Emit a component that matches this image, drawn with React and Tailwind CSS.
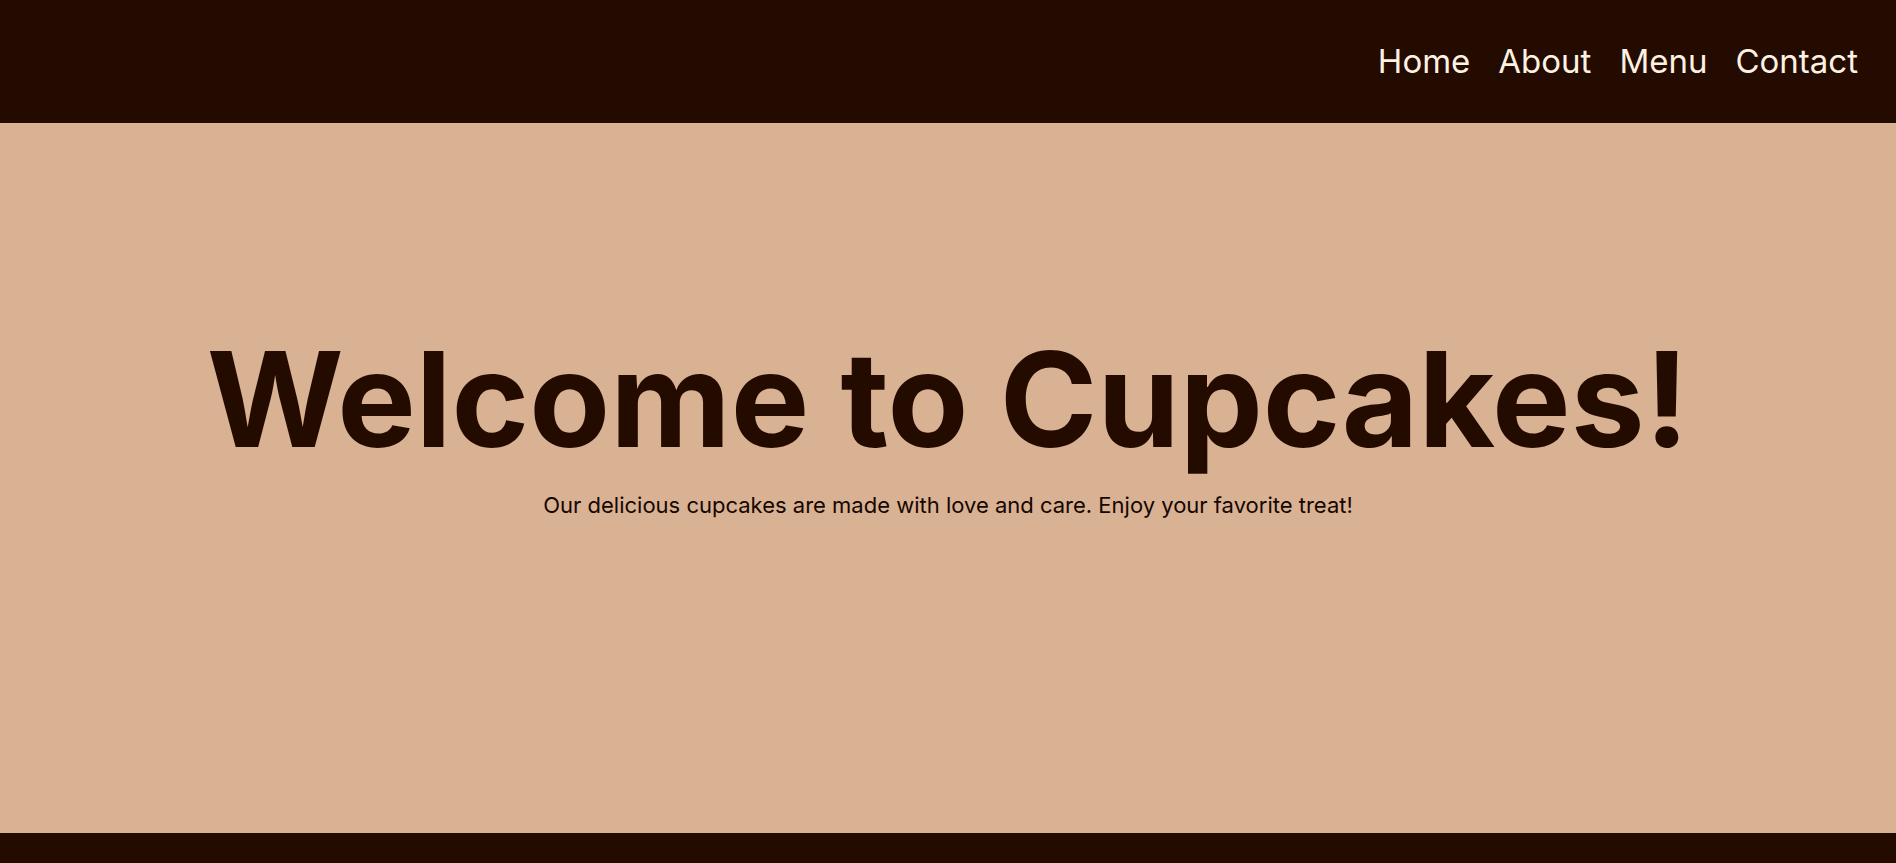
import React from "react";

const links = ["Home", "About", "Menu", "Contact"];

export default function App() {
  return (
    <div className="flex h-[863px] flex-col bg-[#d9b193] font-['Inter',sans-serif]">
      {/* Header */}
      <header className="flex h-[123px] items-center justify-end bg-[#240b00] pr-[38px]">
        <nav className="flex items-center gap-[28px]">
          {links.map((l) => (
            <a key={l} href="#" className="text-[33px] leading-none text-[#fdf1e2]">
              {l}
            </a>
          ))}
        </nav>
      </header>

      {/* Hero */}
      <main className="flex flex-1 flex-col items-center pt-[210px]">
        <h1 className="text-[132px] font-bold leading-none text-[#240b00]">Welcome to Cupcakes!</h1>
        <p className="mt-[25px] text-[22px] leading-[30px] text-[#150700]">
          Our delicious cupcakes are made with love and care. Enjoy your favorite treat!
        </p>
      </main>

      <footer className="h-[30px] bg-[#240b00]" />
    </div>
  );
}
